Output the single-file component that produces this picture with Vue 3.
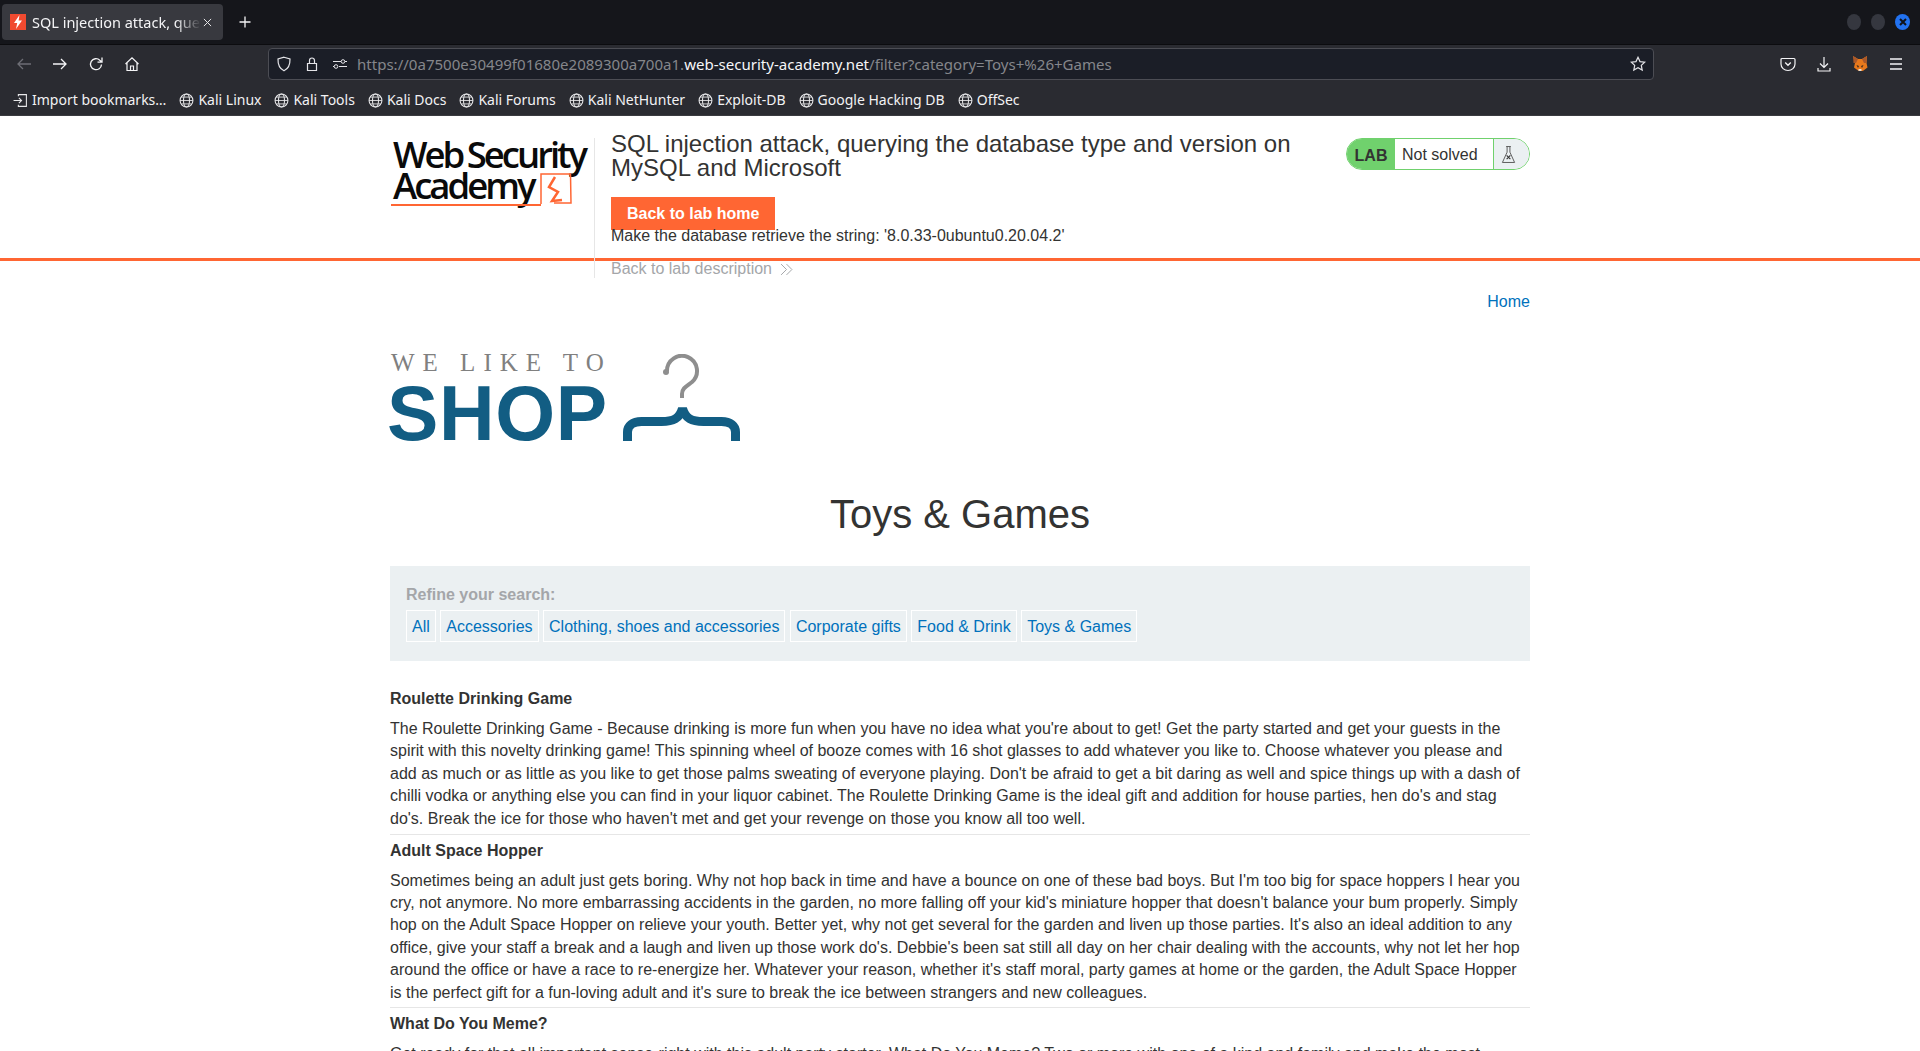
<script setup>
const bookmarks = ['Kali Linux', 'Kali Tools', 'Kali Docs', 'Kali Forums', 'Kali NetHunter', 'Exploit-DB', 'Google Hacking DB', 'OffSec']
const filters = ['All', 'Accessories', 'Clothing, shoes and accessories', 'Corporate gifts', 'Food & Drink', 'Toys & Games']
const products = [
  {
    name: 'Roulette Drinking Game',
    text: "The Roulette Drinking Game - Because drinking is more fun when you have no idea what you're about to get! Get the party started and get your guests in the spirit with this novelty drinking game! This spinning wheel of booze comes with 16 shot glasses to add whatever you like to. Choose whatever you please and add as much or as little as you like to get those palms sweating of everyone playing. Don't be afraid to get a bit daring as well and spice things up with a dash of chilli vodka or anything else you can find in your liquor cabinet. The Roulette Drinking Game is the ideal gift and addition for house parties, hen do's and stag do's. Break the ice for those who haven't met and get your revenge on those you know all too well."
  },
  {
    name: 'Adult Space Hopper',
    text: "Sometimes being an adult just gets boring. Why not hop back in time and have a bounce on one of these bad boys. But I'm too big for space hoppers I hear you cry, not anymore. No more embarrassing accidents in the garden, no more falling off your kid's miniature hopper that doesn't balance your bum properly. Simply hop on the Adult Space Hopper on relieve your youth. Better yet, why not get several for the garden and liven up those parties. It's also an ideal addition to any office, give your staff a break and a laugh and liven up those work do's. Debbie's been sat still all day on her chair dealing with the accounts, why not let her hop around the office or have a race to re-energize her. Whatever your reason, whether it's staff moral, party games at home or the garden, the Adult Space Hopper is the perfect gift for a fun-loving adult and it's sure to break the ice between strangers and new colleagues."
  },
  {
    name: 'What Do You Meme?',
    text: "Get ready for that all important sense-right with this adult party starter. What Do You Meme? Two or more with one of a kind and family and make the most hilarious memes of all."
  }
]
</script>

<template>
  <div class="page">
    <div class="tabbar">
      <div class="tab">
        <svg class="favicon" viewBox="0 0 16 16"><rect width="16" height="16" fill="#f04a30"/><path d="M9.500 1 4 9h3.200L6 15l6-8.500H8.600z" fill="#fff"/></svg>
        <span class="tab-title">SQL injection attack, querying the database</span>
        <svg class="tab-close" viewBox="0 0 10 10"><path d="M1 1l8 8M9 1l-8 8" stroke="#e8e8ea" stroke-width="1.100" fill="none"/></svg>
      </div>
      <svg class="new-tab" viewBox="0 0 12 12"><path d="M6 .5v11M.5 6h11" stroke="#f4f4f6" stroke-width="1.300" fill="none"/></svg>
      <div class="win-btns">
        <span class="win-dot"></span>
        <span class="win-dot"></span>
        <span class="win-dot win-close">
          <svg viewBox="0 0 10 10"><path d="M2 2l6 6M8 2l-6 6" stroke="#10131a" stroke-width="2" fill="none"/></svg>
        </span>
      </div>
    </div>

    <div class="navbar">
      <svg class="nav-ico" viewBox="0 0 16 16"><path d="M15 8H2M7 3 2 8l5 5" stroke="#6d6e75" stroke-width="1.300" fill="none"/></svg>
      <svg class="nav-ico" viewBox="0 0 16 16"><path d="M1 8h13M9 3l5 5-5 5" stroke="#f4f4f6" stroke-width="1.300" fill="none"/></svg>
      <svg class="nav-ico" viewBox="0 0 16 16"><path d="M13.500 8.500a5.500 5.500 0 1 1-1.700-4.300L14 6.200M14 1.500v4.700H9.500" stroke="#f4f4f6" stroke-width="1.300" fill="none"/></svg>
      <svg class="nav-ico" viewBox="0 0 16 16"><path d="M1.500 8 8 1.800 14.500 8M3 7v7.500h10V7M6.500 14.500V10h3v4.500" stroke="#f4f4f6" stroke-width="1.200" fill="none"/></svg>
      <div class="urlbar">
        <svg class="url-ico" viewBox="0 0 16 16"><path d="M8 1.200 14 3c.2 6-1.800 9.800-6 11.800C3.800 12.800 1.800 9 2 3z" stroke="#e4e4e8" stroke-width="1.200" fill="none"/></svg>
        <svg class="url-ico" viewBox="0 0 16 16"><path d="M3.500 7.500h9v7h-9zM5.500 7.500V4.500a2.500 2.500 0 0 1 5 0v3" stroke="#e4e4e8" stroke-width="1.200" fill="none"/></svg>
        <svg class="url-ico" viewBox="0 0 16 16"><path d="M1 5.500h8M13 5.500h2M7 10.500h8M1 10.500h1" stroke="#e4e4e8" stroke-width="1.200" fill="none"/><circle cx="11" cy="5.500" r="1.800" stroke="#e4e4e8" fill="none"/><circle cx="4" cy="10.500" r="1.800" stroke="#e4e4e8" fill="none"/></svg>
        <span class="url"><span class="url-dim">https://0a7500e30499f01680e2089300a700a1.</span><span class="url-host">web-security-academy.net</span><span class="url-dim">/filter?category=Toys+%26+Games</span></span>
        <svg class="url-ico" viewBox="0 0 16 16"><path d="m8 1.300 2 4.300 4.700.6-3.400 3.200.9 4.700L8 11.800l-4.200 2.300.9-4.700L1.300 6.200 6 5.600z" stroke="#e4e4e8" stroke-width="1.200" fill="none"/></svg>
      </div>
      <div class="nav-right">
        <svg class="nav-ico" viewBox="0 0 16 16"><path d="M2 2.500h12a1 1 0 0 1 1 1V8a7 6.500 0 0 1-14 0V3.500a1 1 0 0 1 1-1z" stroke="#f4f4f6" stroke-width="1.200" fill="none"/><path d="m5.200 6.500 2.800 2.800 2.800-2.800" stroke="#f4f4f6" stroke-width="1.300" fill="none"/></svg>
        <svg class="nav-ico" viewBox="0 0 16 16"><path d="M8 1v10M4 7.500 8 11.500l4-4M2 12v3h12v-3" stroke="#f4f4f6" stroke-width="1.200" fill="none"/></svg>
        <svg class="nav-ico" viewBox="0 0 16 16"><path d="M1 0l5 3h4l5-3-.5 7 1 4.500-4 3-1 .5H7l-1-.5-4-3 1-4.500z" fill="#e8791c"/><path d="M1 0l5 3-2 4H1.500zM15 0l-5 3 2 4h2.500z" fill="#a9582a"/><path d="M4.500 9l2.500 1-1 2zM11.500 9l-2.500 1 1 2z" fill="#3a2a20"/><path d="M6.500 13h3v2h-3z" fill="#eadfd3"/></svg>
        <svg class="nav-ico" viewBox="0 0 16 16"><path d="M2 3h12M2 8h12M2 13h12" stroke="#f4f4f6" stroke-width="1.300" fill="none"/></svg>
      </div>
    </div>

    <div class="bookmarks">
      <div class="bm">
        <svg class="bm-ico" viewBox="0 0 14 14"><path d="M5 3V1.500h7.500v11H5V11M.5 7h7M5.500 4.500 8 7l-2.500 2.500" stroke="#e8e8ea" stroke-width="1" fill="none"/></svg>
        <span>Import bookmarks…</span>
      </div>
      <div v-for="b in bookmarks" :key="b" class="bm">
        <svg class="bm-ico" viewBox="0 0 14 14"><circle cx="7" cy="7" r="6" stroke="#e8e8ea" fill="none"/><ellipse cx="7" cy="7" rx="2.800" ry="6" stroke="#e8e8ea" fill="none"/><path d="M1 7h12M2 3.800h10M2 10.200h10" stroke="#e8e8ea" stroke-width=".8" fill="none"/></svg>
        <span>{{ b }}</span>
      </div>
    </div>

    <div class="content">
      <header class="lab-header">
        <div class="lab-wrap">
          <div class="lab-logo">
            <div class="logo-mark">
              <div>Web Security</div>
              <div>Academy</div>
              <svg class="logo-bolt" viewBox="0 0 32 32"><path d="M1 31V1h29.500l.5 29H14" stroke="#ff6633" stroke-width="1.500" fill="none"/><path d="M15 4 9 14l9 5-6 9 10-1" stroke="#ff6633" stroke-width="2.500" fill="none"/></svg>
              <div class="logo-swoosh"></div>
            </div>
          </div>
          <div class="lab-info">
            <h2 class="lab-title">SQL injection attack, querying the database type and version on MySQL and Microsoft</h2>
            <a class="lab-btn">Back to lab home</a>
            <div class="lab-goal">Make the database retrieve the string: '8.0.33-0ubuntu0.20.04.2'</div>
            <a class="lab-back">
              Back to lab description
              <svg class="lab-chev" viewBox="0 0 12 12"><path d="M1 1l5 5-5 5M6 1l5 5-5 5" stroke="#a4a6a9" stroke-width=".9" fill="none"/></svg>
            </a>
          </div>
          <div class="lab-status">
            <span class="status-lab">LAB</span>
            <span class="status-text">Not solved</span>
            <span class="status-icon">
              <svg viewBox="0 0 16 20"><path d="M5.500 1.500h5M6.500 1.500v6L1.500 18.500h13L9.500 7.500v-6" stroke="#555" stroke-width="1" fill="none"/><path d="M6 11l4 4M10 11l-4 4" stroke="#333" stroke-width="1.200" fill="none"/></svg>
            </span>
          </div>
        </div>
      </header>

      <main class="shop">
        <nav class="top-links"><a>Home</a></nav>
        <div class="shop-logo">
          <div class="shop-text">
            <div class="shop-small">WE LIKE TO</div>
            <div class="shop-big">SHOP</div>
          </div>
          <svg class="hanger" viewBox="0 0 117 87"><path d="M44 17a15 15 0 1 1 25 11c-5 4-10 6-10 12v4" stroke="#8e8e8e" stroke-width="4" fill="none"/><circle cx="43" cy="18" r="3" fill="#8e8e8e"/><path d="M4.500 87v-9c0-6 5-10.500 14-10.500h20c12 0 18-3 21-13 3 10 9 13 21 13h18c9 0 14 4.500 14 10.500v9" stroke="#125d83" stroke-width="9" stroke-linejoin="bevel" fill="none"/></svg>
        </div>
        <h1 class="page-title">Toys &amp; Games</h1>
        <section class="filters">
          <div class="filters-label">Refine your search:</div>
          <div class="filters-list">
            <a v-for="f in filters" :key="f" class="filter">{{ f }}</a>
          </div>
        </section>
        <section class="products">
          <article v-for="p in products" :key="p.name" class="product">
            <h3 class="product-name">{{ p.name }}</h3>
            <p class="product-text">{{ p.text }}</p>
          </article>
        </section>
      </main>
    </div>
  </div>
</template>

<style>
html, body {
  margin: 0;
  height: 100%;
  overflow: hidden;
  background: #fff;
}
</style>

<style scoped>
.page {
  height: 1051px;
  overflow: hidden;
  display: flex;
  flex-direction: column;
  font-family: "Liberation Sans", Arial, sans-serif;
}

.tabbar {
  height: 44px;
  flex-shrink: 0;
  display: flex;
  align-items: center;
  background: #15161b;
  padding-left: 2px;
}
.tab {
  width: 221px;
  height: 36px;
  background: #38393f;
  border-radius: 4px;
  display: flex;
  align-items: center;
  padding: 0 11px 0 8px;
  box-sizing: border-box;
  color: #f4f4f6;
  font: 14.500px "Noto Sans", sans-serif;
}
.favicon { width: 16px; height: 16px; flex-shrink: 0; margin-right: 6px; }
.tab-title {
  flex: 1;
  overflow: hidden;
  white-space: nowrap;
  -webkit-mask-image: linear-gradient(to right, #000 85%, transparent);
  mask-image: linear-gradient(to right, #000 85%, transparent);
}
.tab-close { width: 9px; height: 9px; margin-left: 2px; flex-shrink: 0; }
.new-tab { width: 12px; height: 12px; margin-left: 16px; }
.win-btns { margin-left: auto; display: flex; gap: 10px; padding-right: 10px; }
.win-dot { width: 14px; height: 16px; border-radius: 50%; background: #35373f; display: block; }
.win-close { width: 15px; background: #2272f0; display: flex; align-items: center; justify-content: center; }
.win-close svg { width: 10px; height: 10px; }

.navbar {
  height: 44px;
  flex-shrink: 0;
  display: flex;
  align-items: center;
  background: #2a2b31;
  border-top: 1px solid #0c0c0f;
  box-sizing: border-box;
  padding: 0 0 6px 16px;
  gap: 20px;
}
.nav-ico { width: 16px; height: 16px; flex-shrink: 0; }
.urlbar {
  width: 1386px;
  height: 32px;
  margin-left: 108px;
  display: flex;
  align-items: center;
  box-sizing: border-box;
  background: #1b1e27;
  border: 1px solid #4c4d54;
  border-radius: 4px;
  padding: 0 7px;
  gap: 12px;
  flex-shrink: 0;
}
.url-ico { width: 16px; height: 16px; flex-shrink: 0; }
.url {
  flex: 1;
  margin-left: -3px;
  font: 15.050px "Noto Sans", sans-serif;
  white-space: nowrap;
}
.url-dim { color: #85868b; }
.url-host { color: #f6f6f8; }
.nav-right { display: flex; gap: 20px; margin-left: 106px; }

.bookmarks {
  height: 28px;
  flex-shrink: 0;
  box-sizing: border-box;
  display: flex;
  align-items: flex-start;
  gap: 13px;
  padding: 2px 0 0 13px;
  background: #2a2b31;
  border-bottom: 1px solid #3a3b40;
  color: #f2f2f4;
  font: 14px/20px "Noto Sans", sans-serif;
}
.bm { display: flex; align-items: center; gap: 4px; white-space: nowrap; }
.bm-ico { width: 15px; height: 15px; }

.content {
  flex: 1;
  min-height: 0;
  overflow: hidden;
  color: #333332;
  font-size: 16px;
  background: #fff;
}

.lab-header {
  height: 145px;
  border-bottom: 3px solid #ff6633;
  box-sizing: border-box;
}
.lab-wrap {
  width: 1140px;
  margin: 0 auto;
  display: flex;
}
.lab-logo {
  width: 205px;
  height: 140px;
  margin-top: 22px;
  padding-left: 3px;
  box-sizing: border-box;
  border-right: 1px solid #e6e6e6;
  flex-shrink: 0;
}
.logo-mark {
  position: relative;
  margin-top: 1px;
  color: #0a0a0a;
  font: 600 36.500px/31px "Open Sans", sans-serif;
  letter-spacing: -3px;
  word-spacing: -2px;
  white-space: nowrap;
}
.logo-bolt { position: absolute; left: 147px; top: 34px; width: 32px; height: 32px; }
.logo-swoosh { position: absolute; left: -2px; top: 65px; width: 150px; height: 2px; background: #ff6633; }
.lab-info {
  flex: 1;
  min-width: 0;
  padding: 16px 40px 0 16px;
}
.lab-title {
  margin: 0 0 17px;
  font-size: 24px;
  line-height: 24px;
  font-weight: 400;
}
.lab-btn {
  display: block;
  width: fit-content;
  background: #ff6633;
  color: #fff;
  font-weight: 700;
  font-size: 16px;
  line-height: 33px;
  padding: 0 16px;
}
.lab-goal { position: relative; line-height: 22px; margin-top: -5px; }
.lab-back {
  display: flex;
  align-items: center;
  gap: 8px;
  margin-top: 11px;
  color: #a4a6a9;
  line-height: 22px;
}
.lab-chev { width: 13px; height: 13px; }
.lab-status {
  align-self: flex-start;
  margin-top: 22px;
  width: 184px;
  height: 32px;
  display: flex;
  flex-shrink: 0;
  box-sizing: border-box;
  border: 1px solid #70d16d;
  border-radius: 16px;
  overflow: hidden;
}
.status-lab {
  width: 48px;
  background: #70d16d;
  font-weight: 700;
  font-size: 16px;
  line-height: 31px;
  padding-top: 1px;
  text-align: center;
}
.status-text {
  flex: 1;
  line-height: 31px;
  padding-left: 7px;
  border-right: 1px solid #70d16d;
}
.status-icon {
  width: 35px;
  background: #ebf0f2;
  display: flex;
  align-items: center;
  justify-content: center;
}
.status-icon svg { width: 15px; height: 19px; margin-right: 7px; }

.shop { width: 1140px; margin: 0 auto; }
.top-links { text-align: right; line-height: 22px; padding-top: 30px; }
.top-links a { color: #0071bc; }
.shop-logo { display: flex; margin-top: 41px; height: 87px; }
.shop-text { width: 233px; flex-shrink: 0; }
.shop-small {
  font: 25px/17px "Liberation Serif", serif;
  color: #808080;
  letter-spacing: 8px;
  padding-left: 1px;
  white-space: nowrap;
}
.shop-big {
  font-weight: 700;
  font-size: 77px;
  line-height: 56px;
  letter-spacing: .6px;
  color: #125d83;
  margin: 14px 0 0 -3px;
}
.hanger { width: 117px; height: 87px; }
.page-title {
  margin: 49px 0 0;
  font-size: 40px;
  line-height: 48px;
  font-weight: 400;
  text-align: center;
}
.filters {
  margin-top: 28px;
  height: 95px;
  box-sizing: border-box;
  background: #ebf0f2;
  padding: 18px 16px 0;
}
.filters-label { font-weight: 700; color: #a4a6a9; line-height: 22px; }
.filters-list { display: flex; gap: 4.500px; margin-top: 4px; }
.filter {
  color: #0071bc;
  border: 1px solid #fff;
  line-height: 29px;
  padding: 1px 5px 0;
  white-space: nowrap;
}
.products { margin-top: 24px; }
.product { border-bottom: 1px solid #e6e6e6; padding-bottom: 3.500px; margin-bottom: 2px; }
.product-name { margin: 0; font-size: 16px; font-weight: 700; line-height: 22px; padding-top: 3px; }
.product-text { margin: 8px 0 0; line-height: 22.400px; }
</style>
